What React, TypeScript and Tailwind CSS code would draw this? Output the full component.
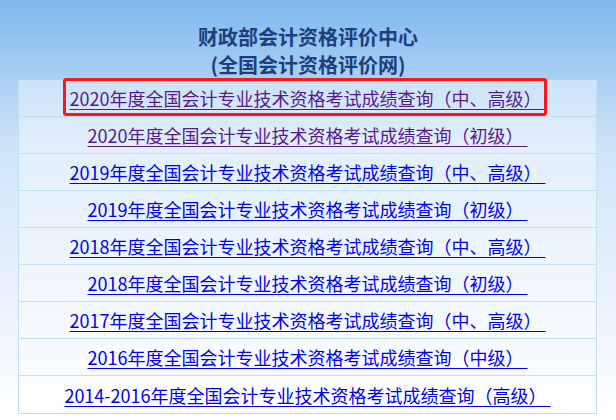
const rows = [
  { text: '2020年度全国会计专业技术资格考试成绩查询（中、高级）', visited: true },
  { text: '2020年度全国会计专业技术资格考试成绩查询（初级）', visited: true },
  { text: '2019年度全国会计专业技术资格考试成绩查询（中、高级）', visited: false },
  { text: '2019年度全国会计专业技术资格考试成绩查询（初级）', visited: false },
  { text: '2018年度全国会计专业技术资格考试成绩查询（中、高级）', visited: false },
  { text: '2018年度全国会计专业技术资格考试成绩查询（初级）', visited: false },
  { text: '2017年度全国会计专业技术资格考试成绩查询（中、高级）', visited: false },
  { text: '2016年度全国会计专业技术资格考试成绩查询（中级）', visited: false },
  { text: '2014-2016年度全国会计专业技术资格考试成绩查询（高级）', visited: false },
];

export default function App() {
  return (
    <div
      className="relative w-[616px] h-[420px] overflow-hidden bg-gradient-to-b from-[#7db8ee] via-[#cfe4f8] via-35% to-white"
      style={{ fontFamily: '"Noto Sans CJK SC", "Noto Sans", sans-serif' }}
    >
      <div className="pt-[23px] text-center text-[20px] font-bold leading-[28px] text-[#1d3f7e]">
        <div>财政部会计资格评价中心</div>
        <div>(全国会计资格评价网)</div>
      </div>

      <div className="ml-[18px] mt-px w-[579px] border-l border-r border-b border-[#bfe0f2]">
        {rows.map((row, i) => (
          <div
            key={i}
            className={`flex h-[37px] items-center justify-center bg-white/40 ${
              i < rows.length - 1 ? 'border-b border-[#bfe0f2]' : ''
            }`}
          >
            <a
              href="#"
              className={`text-[18px] leading-none underline underline-offset-[3px] ${
                row.visited ? 'text-[#551a8b]' : 'text-[#0000ee]'
              }`}
            >
              {row.text + '\u00a0'}
            </a>
          </div>
        ))}
      </div>

      {/* highlight box over the first row */}
      <div className="absolute left-[63px] top-[78px] h-[38px] w-[484px] rounded-[3px] border-[3px] border-[#ff1717]" />
    </div>
  );
}
